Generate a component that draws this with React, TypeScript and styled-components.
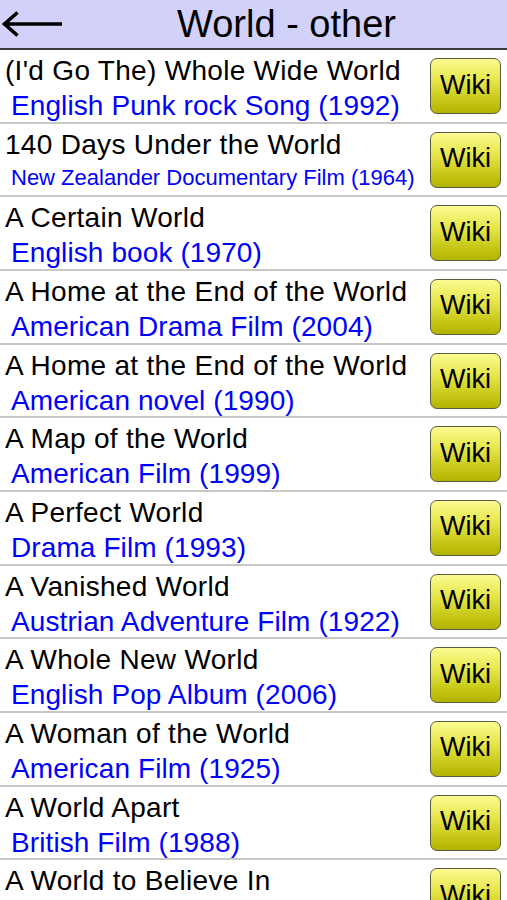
import React from "react";
import styled, { createGlobalStyle } from "styled-components";

const GlobalStyle = createGlobalStyle`
  html, body {
    margin: 0;
    padding: 0;
    background: #ffffff;
    overflow: hidden;
  }
  body {
    font-family: "Liberation Sans", Arial, sans-serif;
  }
`;

const Screen = styled.div`
  width: 507px;
  height: 900px;
  overflow: hidden;
  background: #ffffff;
  display: flex;
  flex-direction: column;
`;

const Header = styled.header`
  height: 48px;
  flex: 0 0 48px;
  background: #d1d1f9;
  border-bottom: 2px solid #3a3a3a;
  display: flex;
  align-items: center;
`;

const BackButton = styled.button`
  width: 66px;
  height: 48px;
  border: none;
  background: transparent;
  padding: 0;
  display: flex;
  align-items: center;
  justify-content: flex-start;
  cursor: pointer;
`;

const HeaderTitle = styled.h1`
  flex: 1;
  margin: 0;
  text-align: center;
  font-family: "Liberation Sans", Arial, sans-serif;
  font-weight: normal;
  font-size: 38px;
  line-height: 50px;
  color: #000000;
`;

const List = styled.ul`
  list-style: none;
  margin: 0;
  padding: 0;
  display: flex;
  flex-direction: column;
`;

const Row = styled.li`
  height: 71.67px;
  flex: 0 0 71.67px;
  border-bottom: 2px solid #c8c8c8;
  display: flex;
  align-items: flex-start;
  justify-content: space-between;
`;

const TextCol = styled.div`
  flex: 1;
  min-width: 0;
  padding: 3px 0 0 5px;
  display: flex;
  flex-direction: column;
  white-space: nowrap;
`;

const Title = styled.div`
  font-size: 28px;
  line-height: 36px;
  letter-spacing: 0.3px;
  color: #000000;
`;

const Subtitle = styled.div<{ $small?: boolean }>`
  padding-left: 6px;
  font-size: ${(p) => (p.$small ? "22px" : "28px")};
  line-height: ${(p) => (p.$small ? "30px" : "34px")};
  letter-spacing: ${(p) => (p.$small ? "0" : "0.1px")};
  color: #0000ff;
`;

const WikiButton = styled.button`
  flex: 0 0 auto;
  width: 71px;
  height: 56px;
  margin: 8px 6px 0 0;
  padding: 0 0 2px 0;
  border: 1px solid #5a5a40;
  border-radius: 7px;
  background: linear-gradient(to bottom, #fbfb92 0%, #e6e64a 40%, #c8c818 75%, #b2b200 100%);
  font-family: "Liberation Sans", Arial, sans-serif;
  font-size: 27px;
  color: #000000;
  cursor: pointer;
`;

type Item = { title: string; sub: string; small?: boolean };

const items: Item[] = [
  { title: "(I'd Go The) Whole Wide World", sub: "English Punk rock Song (1992)" },
  { title: "140 Days Under the World", sub: "New Zealander Documentary Film (1964)", small: true },
  { title: "A Certain World", sub: "English book (1970)" },
  { title: "A Home at the End of the World", sub: "American Drama Film (2004)" },
  { title: "A Home at the End of the World", sub: "American novel (1990)" },
  { title: "A Map of the World", sub: "American Film (1999)" },
  { title: "A Perfect World", sub: "Drama Film (1993)" },
  { title: "A Vanished World", sub: "Austrian Adventure Film (1922)" },
  { title: "A Whole New World", sub: "English Pop Album (2006)" },
  { title: "A Woman of the World", sub: "American Film (1925)" },
  { title: "A World Apart", sub: "British Film (1988)" },
  { title: "A World to Believe In", sub: "Song (2008)" },
];

const BackArrow = () => (
  <svg width="66" height="48" viewBox="0 0 66 48" aria-hidden="true">
    <path
      d="M4.5 24 H62 M17.5 12.5 L4.5 24 L17.5 35.5"
      fill="none"
      stroke="#000"
      strokeWidth="3.6"
      strokeLinecap="butt"
      strokeLinejoin="miter"
    />
  </svg>
);

export default function App() {
  return (
    <>
      <GlobalStyle />
      <Screen>
        <Header>
          <BackButton aria-label="Back">
            <BackArrow />
          </BackButton>
          <HeaderTitle>World - other</HeaderTitle>
        </Header>
        <List>
          {items.map((it, i) => (
            <Row key={i}>
              <TextCol>
                <Title>{it.title}</Title>
                <Subtitle $small={it.small}>{it.sub}</Subtitle>
              </TextCol>
              <WikiButton>Wiki</WikiButton>
            </Row>
          ))}
        </List>
      </Screen>
    </>
  );
}
